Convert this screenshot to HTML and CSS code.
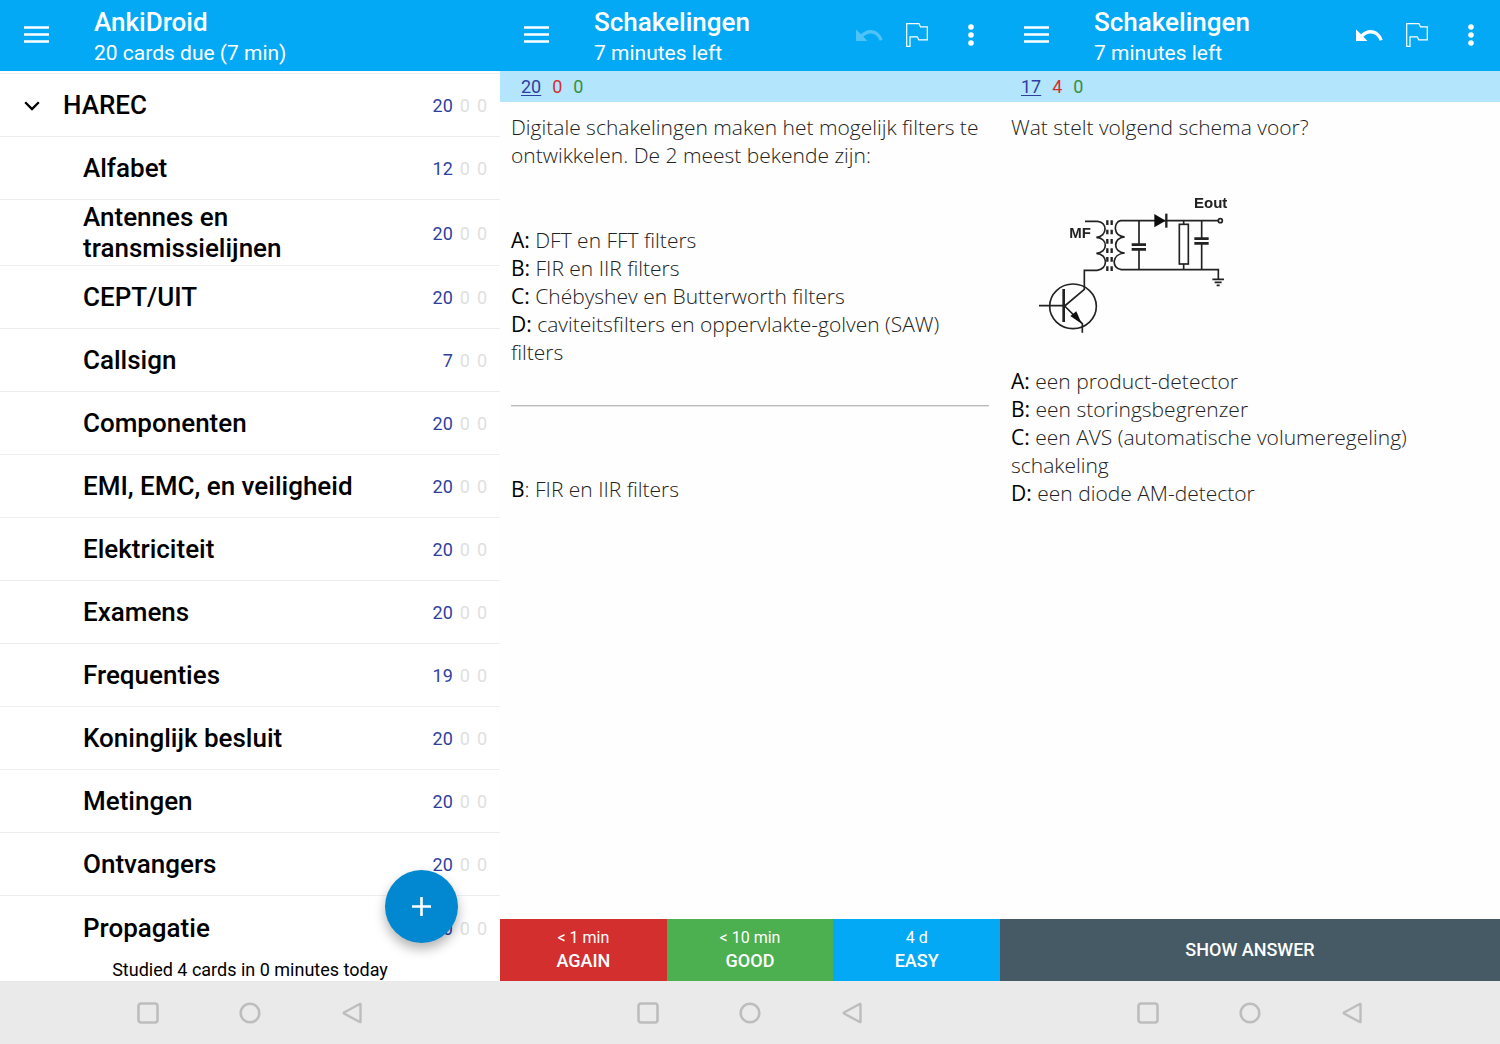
FILE: index.html
```html
<!DOCTYPE html>
<html lang="nl">
<head>
<meta charset="utf-8">
<meta name="viewport" content="width=device-width, initial-scale=1">
<title>AnkiDroid</title>
<link rel="stylesheet" href="styles.css">
</head>
<body>
<svg class="defs" aria-hidden="true">
  <symbol id="menu" viewBox="0 0 25 17"><path d="M0 1.500h25M0 8.500h25M0 15.500h25" stroke="currentColor" stroke-width="2.600"/></symbol>
  <symbol id="undo" viewBox="0 0 27 12"><path d="M0 0.500V12h11.500L7.300 7.800C9.300 6 11.700 4.500 14.500 4.500c4.200 0 7.700 2.800 9.200 7.200l3-1C24.700 5 20.300 1 14.500 1 11 1 7.700 2.700 5.100 5.300z" fill="currentColor"/></symbol>
  <symbol id="flag" viewBox="0 0 22 24"><path d="M.7.700H13L14.500 3.800H21.300V16.800H12.800L11.300 13.800H4V23.300H.7z" fill="none" stroke="currentColor" stroke-width="1.200"/></symbol>
  <symbol id="dots" viewBox="0 0 6 22"><g fill="currentColor"><circle cx="3" cy="3" r="2.800"/><circle cx="3" cy="11" r="2.800"/><circle cx="3" cy="19" r="2.800"/></g></symbol>
  <symbol id="square" viewBox="0 0 22 22"><rect x="1.500" y="1.500" width="19" height="19" rx="2.500" fill="none" stroke="currentColor" stroke-width="2.600"/></symbol>
  <symbol id="circle" viewBox="0 0 22 22"><circle cx="11" cy="11" r="9.300" fill="none" stroke="currentColor" stroke-width="2.600"/></symbol>
  <symbol id="back" viewBox="0 0 22 22"><path d="M19.500 2.200V19.800Q19.500 20.500 18.700 20L3 11.500Q2.200 11 3 10.500L18.700 2Q19.500 1.500 19.500 2.200z" fill="none" stroke="currentColor" stroke-width="2.400" stroke-linejoin="round"/></symbol>
</svg>
<main class="screens">

  <section class="screen">
    <header class="bar">
      <button class="icon menu" aria-label="Menu"><svg width="25" height="17"><use href="#menu"/></svg></button>
      <div class="heading"><h1>AnkiDroid</h1><p>20 cards due (7 min)</p></div>
    </header>
    <div class="list-area">
      <ul class="decks">
        <li class="parent"><button class="icon expand" aria-label="Collapse"><svg width="16" height="10" viewBox="0 0 16 10"><path d="M1.200 1.200 8 8 14.800 1.200" fill="none" stroke="#000" stroke-width="2.300"/></svg></button><a href="#">HAREC</a><span class="due"><b>20</b><i>0</i><i>0</i></span></li>
        <li><a href="#">Alfabet</a><span class="due"><b>12</b><i>0</i><i>0</i></span></li>
        <li><a href="#">Antennes en transmissielijnen</a><span class="due"><b>20</b><i>0</i><i>0</i></span></li>
        <li><a href="#">CEPT/UIT</a><span class="due"><b>20</b><i>0</i><i>0</i></span></li>
        <li><a href="#">Callsign</a><span class="due"><b>7</b><i>0</i><i>0</i></span></li>
        <li><a href="#">Componenten</a><span class="due"><b>20</b><i>0</i><i>0</i></span></li>
        <li><a href="#">EMI, EMC, en veiligheid</a><span class="due"><b>20</b><i>0</i><i>0</i></span></li>
        <li><a href="#">Elektriciteit</a><span class="due"><b>20</b><i>0</i><i>0</i></span></li>
        <li><a href="#">Examens</a><span class="due"><b>20</b><i>0</i><i>0</i></span></li>
        <li><a href="#">Frequenties</a><span class="due"><b>19</b><i>0</i><i>0</i></span></li>
        <li><a href="#">Koninglijk besluit</a><span class="due"><b>20</b><i>0</i><i>0</i></span></li>
        <li><a href="#">Metingen</a><span class="due"><b>20</b><i>0</i><i>0</i></span></li>
        <li><a href="#">Ontvangers</a><span class="due"><b>20</b><i>0</i><i>0</i></span></li>
        <li><a href="#">Propagatie</a><span class="due"><b>20</b><i>0</i><i>0</i></span></li>
      </ul>
      <p class="studied">Studied 4 cards in 0 minutes today</p>
      <button class="fab" aria-label="Add"><svg width="19" height="19" viewBox="0 0 19 19"><path d="M9.500 0v19M0 9.500h19" stroke="#fff" stroke-width="2.600"/></svg></button>
    </div>
    <nav class="system">
      <button class="icon" aria-label="Recent apps"><svg width="22" height="22"><use href="#square"/></svg></button>
      <button class="icon" aria-label="Home"><svg width="22" height="22"><use href="#circle"/></svg></button>
      <button class="icon" aria-label="Back"><svg width="22" height="22"><use href="#back"/></svg></button>
    </nav>
  </section>

  <section class="screen">
    <header class="bar">
      <button class="icon menu" aria-label="Menu"><svg width="25" height="17"><use href="#menu"/></svg></button>
      <div class="heading"><h1>Schakelingen</h1><p>7 minutes left</p></div>
      <div class="actions">
        <button class="icon undo" aria-label="Undo" disabled><svg width="27" height="12"><use href="#undo"/></svg></button>
        <button class="icon flag" aria-label="Flag"><svg width="22" height="24"><use href="#flag"/></svg></button>
        <button class="icon" aria-label="More"><svg width="6" height="22"><use href="#dots"/></svg></button>
      </div>
    </header>
    <div class="counts"><span class="new">20</span><span class="learn">0</span><span class="review">0</span></div>
    <article class="card">
      <p>Digitale schakelingen maken het mogelijk filters te ontwikkelen. De 2 meest bekende zijn:</p>
      <ul class="options spaced">
        <li><b>A:</b> DFT en FFT filters</li>
        <li><b>B:</b> FIR en IIR filters</li>
        <li><b>C:</b> Chébyshev en Butterworth filters</li>
        <li><b>D:</b> caviteitsfilters en oppervlakte-golven (SAW) filters</li>
      </ul>
      <hr>
      <p><b>B</b>: FIR en IIR filters</p>
    </article>
    <div class="answers">
      <button class="again"><small>&lt; 1 min</small>AGAIN</button>
      <button class="good"><small>&lt; 10 min</small>GOOD</button>
      <button class="easy"><small>4 d</small>EASY</button>
    </div>
    <nav class="system">
      <button class="icon" aria-label="Recent apps"><svg width="22" height="22"><use href="#square"/></svg></button>
      <button class="icon" aria-label="Home"><svg width="22" height="22"><use href="#circle"/></svg></button>
      <button class="icon" aria-label="Back"><svg width="22" height="22"><use href="#back"/></svg></button>
    </nav>
  </section>

  <section class="screen">
    <header class="bar">
      <button class="icon menu" aria-label="Menu"><svg width="25" height="17"><use href="#menu"/></svg></button>
      <div class="heading"><h1>Schakelingen</h1><p>7 minutes left</p></div>
      <div class="actions">
        <button class="icon undo" aria-label="Undo"><svg width="27" height="12"><use href="#undo"/></svg></button>
        <button class="icon flag" aria-label="Flag"><svg width="22" height="24"><use href="#flag"/></svg></button>
        <button class="icon" aria-label="More"><svg width="6" height="22"><use href="#dots"/></svg></button>
      </div>
    </header>
    <div class="counts"><span class="new">17</span><span class="learn">4</span><span class="review">0</span></div>
    <article class="card">
      <p>Wat stelt volgend schema voor?</p>
      <svg class="schema" viewBox="0 0 720 510" role="img" aria-label="Schema">
        <defs><filter id="soft"><feGaussianBlur stdDeviation="2"/></filter></defs>
        <g filter="url(#soft)" fill="none" stroke="#222" stroke-width="5">
          <path d="M195 124h38c30 2 30 46-4 48 36 2 36 46 0 48 36 2 36 48 2 51h-38v57L134 378"/>
          <path d="M595 122H302c-22 4-24 46 12 49-36 2-36 46 0 48-40 3-40 46-10 50h291v28"/>
          <path d="M262 121v14M275 121v14M262 149v14M275 149v14M262 177v14M275 177v14M262 205v14M275 205v14M262 231v14M275 231v14M262 259v14M275 259v14" stroke-width="7"/>
          <path d="M357 122v72M357 208v61M545 122v53M545 190v79M491 122v11M491 252v17"/>
          <path d="M335 194h43M335 208h43M523 176h43M523 190h43" stroke-width="8"/>
          <path d="M403 102v40l34-20z" fill="#111" stroke="none"/>
          <path d="M439 101v42" stroke-width="7"/>
          <rect x="478" y="133" width="27" height="119"/>
          <circle cx="601" cy="122" r="6" fill="#fff"/>
          <path d="M577 298h35M584 307h21M590 316h9"/>
          <ellipse cx="159" cy="379" rx="70" ry="67"/>
          <path d="M57 377h75M134 378l53 53v27"/>
          <path d="M131 327v99" stroke-width="8"/>
          <path d="M151 408l18-14 16 37z" fill="#111" stroke="none"/>
        </g>
        <g class="schema-text" filter="url(#soft)"><text x="522" y="84">Eout</text><text x="148" y="173">MF</text></g>
      </svg>
      <ul class="options">
        <li><b>A:</b> een product-detector</li>
        <li><b>B:</b> een storingsbegrenzer</li>
        <li><b>C:</b> een AVS (automatische volumeregeling) schakeling</li>
        <li><b>D:</b> een diode AM-detector</li>
      </ul>
    </article>
    <div class="answers"><button class="show">SHOW ANSWER</button></div>
    <nav class="system">
      <button class="icon" aria-label="Recent apps"><svg width="22" height="22"><use href="#square"/></svg></button>
      <button class="icon" aria-label="Home"><svg width="22" height="22"><use href="#circle"/></svg></button>
      <button class="icon" aria-label="Back"><svg width="22" height="22"><use href="#back"/></svg></button>
    </nav>
  </section>
</main>
</body>
</html>
```
FILE: styles.css
```css
* { box-sizing: border-box; }
body, h1, p, ul { margin: 0; padding: 0; }
body { font-family: Roboto, sans-serif; color: #000; background: #fff; }
ul { list-style: none; }
button { border: 0; padding: 0; background: none; color: inherit; font: inherit; }
svg { display: block; }
.defs { position: absolute; width: 0; height: 0; }

.screens { display: grid; grid-template-columns: repeat(3, 1fr); min-height: 100vh; }
.screen { display: flex; flex-direction: column; min-width: 0; }
.icon { display: flex; align-items: center; justify-content: center; }

/* App bar */
.bar { display: flex; align-items: center; height: 71px; padding: 0 26px 2px 24px; background: #03a9f4; color: #fff; }
.menu { margin-right: 45px; }
.heading { flex: 1; padding-top: 4px; }
.heading h1 { font-size: 26px; font-weight: 500; line-height: 32px; }
.heading p { font-size: 21px; line-height: 30px; }
.actions { display: flex; align-items: center; }
.undo { margin-right: 23px; }
.undo:disabled { opacity: 0.3; }
.flag { margin-right: 40px; }

/* Deck list */
.list-area { position: relative; flex: 1; display: flex; flex-direction: column; padding-top: 2px; }
.decks { border-top: 1px solid #eee; flex: 1; }
.decks li { display: flex; align-items: center; min-height: 63px; padding: 2px 13px 1px 83px; border-bottom: 1px solid #eee; }
.decks li:last-child { border-bottom: 0; }
.decks li.parent { padding-left: 24px; }
.expand { margin-right: 23px; }
.decks a { flex: 1; padding-right: 60px; color: #000; font-size: 26px; font-weight: 500; line-height: 31px; text-decoration: none; }
.due { display: flex; gap: 7px; font-size: 18px; }
.due b { font-weight: 400; color: #303f9f; }
.due i { font-style: normal; color: #e0e0e0; }
.studied { font-size: 18px; line-height: 22px; text-align: center; }
.fab { position: absolute; right: 42px; bottom: 38px; width: 73px; height: 73px; border-radius: 50%; background: #0288d1; display: flex; align-items: center; justify-content: center; box-shadow: 0 6px 12px rgba(0, 0, 0, 0.3); }

/* Reviewer */
.counts { display: flex; gap: 11px; height: 31px; padding-left: 21px; background: #b3e5fc; font-size: 18px; line-height: 32px; }
.new { color: #303f9f; text-decoration: underline; text-underline-offset: 2px; }
.learn { color: #d32f2f; }
.review { color: #388e3c; }
.card { flex: 1; padding: 11px; background: #fefefe; font-family: "Open Sans", sans-serif; font-size: 21px; font-weight: 300; line-height: 28px; color: #222; }
.card b { font-weight: 400; color: #000; }
.spaced { margin-top: 57px; }
.card hr { height: 2px; margin: 39px 0 68px; border: 0; border-top: 1px solid #bbb; border-bottom: 1px solid #e4e4e4; }
.schema { width: 240px; height: 170px; margin: 39px 0 17px 9px; }
.schema-text { font-family: "Liberation Sans", sans-serif; font-size: 45px; font-weight: 700; fill: #222; }

.answers { display: flex; height: 62px; color: #fff; font-size: 18px; font-weight: 500; line-height: 24px; }
.answers button { flex: 1; }
.answers small { display: block; font-size: 16px; font-weight: 400; line-height: 22px; }
.again { background: #d32f2f; }
.good { background: #4caf50; }
.easy { background: #03a9f4; }
.answers .show { background: #455a64; }

/* System navigation */
.system { display: flex; justify-content: center; align-items: center; gap: 80px; height: 63px; background: #eaeaea; color: #bdbdbd; }
```
